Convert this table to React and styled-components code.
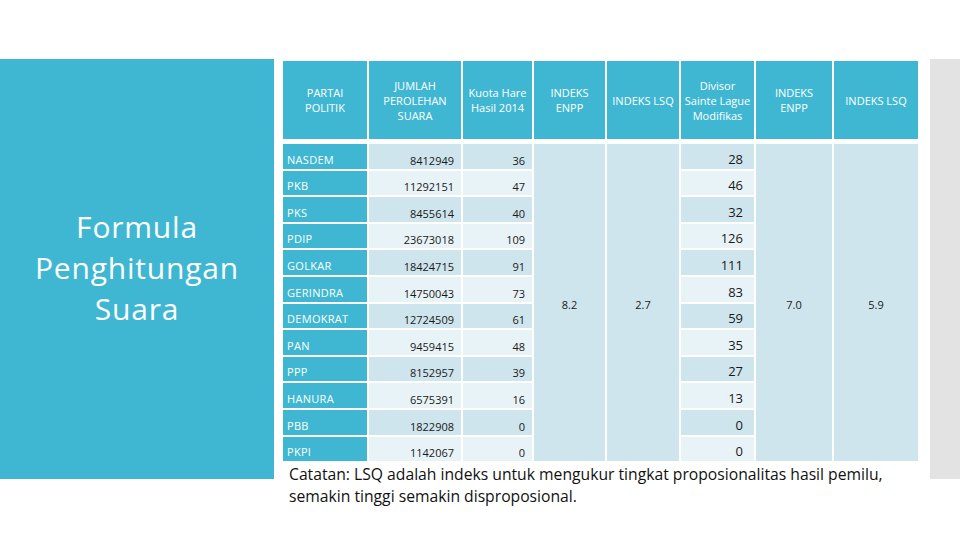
import React from "react";
import styled, { createGlobalStyle } from "styled-components";

const Global = createGlobalStyle`
  html, body { margin: 0; padding: 0; background: #ffffff; }
  body { width: 960px; height: 540px; overflow: hidden; font-family: "Open Sans", "Noto Sans", sans-serif; }
`;

const Slide = styled.div`
  display: flex;
  align-items: flex-start;
  padding-top: 59px;
  width: 960px;
  height: 540px;
  box-sizing: border-box;
`;

const TitlePanel = styled.div`
  width: 274px;
  height: 420px;
  flex: none;
  background: #40b7d2;
  display: flex;
  align-items: center;
  justify-content: center;
`;

const Title = styled.h1`
  margin: 0;
  padding-bottom: 4px;
  font-family: "Open Sans", sans-serif;
  font-weight: 400;
  font-size: 30px;
  line-height: 41px;
  letter-spacing: 0.8px;
  color: #ffffff;
  text-align: center;
`;

const Main = styled.div`
  flex: none;
  width: 635px;
  margin-left: 9px;
  padding-top: 2px;
  display: flex;
  flex-direction: column;
`;

const Table = styled.div`
  display: grid;
  grid-template-columns: 84px 92px 69px 71px 72px 73px 76px 84px;
  grid-template-rows: 81px repeat(12, 24.6px);
  column-gap: 2px;
  row-gap: 2px;
`;

const HeadCell = styled.div`
  background: #40b7d2;
  color: #ffffff;
  font-size: 11px;
  line-height: 15px;
  display: flex;
  align-items: center;
  justify-content: center;
  text-align: center;
  padding: 0 3px;
  margin-bottom: 3px;
`;

const PartyCell = styled.div`
  background: #40b7d2;
  color: #ffffff;
  font-size: 11px;
  letter-spacing: 0.3px;
  display: flex;
  align-items: flex-end;
  padding: 0 0 2px 4px;
`;

const NumCell = styled.div`
  background: ${(p) => (p.$dark ? "#cfe5ed" : "#e8f3f7")};
  color: #1a1a1a;
  font-size: ${(p) => (p.$big ? "13px" : "11px")};
  display: flex;
  align-items: flex-end;
  justify-content: flex-end;
  padding: 0 ${(p) => (p.$big ? "11px" : "7px")} 1px 0;
`;

const MergedCell = styled.div`
  grid-column: ${(p) => p.$col};
  grid-row: 2 / span 12;
  background: #cfe5ed;
  color: #1a1a1a;
  font-size: 11px;
  display: flex;
  align-items: center;
  justify-content: center;
  padding-top: 4px;
`;

const Note = styled.p`
  margin: 2px 0 0 6px;
  font-size: 15.7px;
  line-height: 22px;
  color: #111111;
  white-space: nowrap;
`;

const SideStrip = styled.div`
  flex: none;
  width: 30px;
  height: 420px;
  margin-left: 12px;
  background: #e3e3e3;
`;

const rows = [
  ["NASDEM", "8412949", "36", "28"],
  ["PKB", "11292151", "47", "46"],
  ["PKS", "8455614", "40", "32"],
  ["PDIP", "23673018", "109", "126"],
  ["GOLKAR", "18424715", "91", "111"],
  ["GERINDRA", "14750043", "73", "83"],
  ["DEMOKRAT", "12724509", "61", "59"],
  ["PAN", "9459415", "48", "35"],
  ["PPP", "8152957", "39", "27"],
  ["HANURA", "6575391", "16", "13"],
  ["PBB", "1822908", "0", "0"],
  ["PKPI", "1142067", "0", "0"],
];

const headers = [
  ["PARTAI", "POLITIK"],
  ["JUMLAH", "PEROLEHAN", "SUARA"],
  ["Kuota Hare", "Hasil 2014"],
  ["INDEKS", "ENPP"],
  ["INDEKS LSQ"],
  ["Divisor", "Sainte Lague", "Modifikas"],
  ["INDEKS", "ENPP"],
  ["INDEKS LSQ"],
];

export default function App() {
  return (
    <>
      <Global />
      <Slide>
        <TitlePanel>
          <Title>
            Formula
            <br />
            Penghitungan
            <br />
            Suara
          </Title>
        </TitlePanel>
        <Main>
          <Table>
            {headers.map((h, i) => (
              <HeadCell key={"h" + i}>
                <span>
                  {h.map((l, j) => (
                    <React.Fragment key={j}>
                      {j > 0 && <br />}
                      {l}
                    </React.Fragment>
                  ))}
                </span>
              </HeadCell>
            ))}
            {rows.map((r, i) => {
              const dark = i % 2 === 0;
              const gr = i + 2;
              return (
                <React.Fragment key={r[0]}>
                  <PartyCell style={{ gridRow: gr, gridColumn: 1 }}>{r[0]}</PartyCell>
                  <NumCell $dark={dark} style={{ gridRow: gr, gridColumn: 2 }}>{r[1]}</NumCell>
                  <NumCell $dark={dark} style={{ gridRow: gr, gridColumn: 3 }}>{r[2]}</NumCell>
                  <NumCell $dark={dark} $big style={{ gridRow: gr, gridColumn: 6 }}>{r[3]}</NumCell>
                </React.Fragment>
              );
            })}
            <MergedCell $col={4}>8.2</MergedCell>
            <MergedCell $col={5}>2.7</MergedCell>
            <MergedCell $col={7}>7.0</MergedCell>
            <MergedCell $col={8}>5.9</MergedCell>
          </Table>
          <Note>
            Catatan: LSQ adalah indeks untuk mengukur tingkat proposionalitas hasil pemilu,
            <br />
            semakin tinggi semakin disproposional.
          </Note>
        </Main>
        <SideStrip />
      </Slide>
    </>
  );
}
